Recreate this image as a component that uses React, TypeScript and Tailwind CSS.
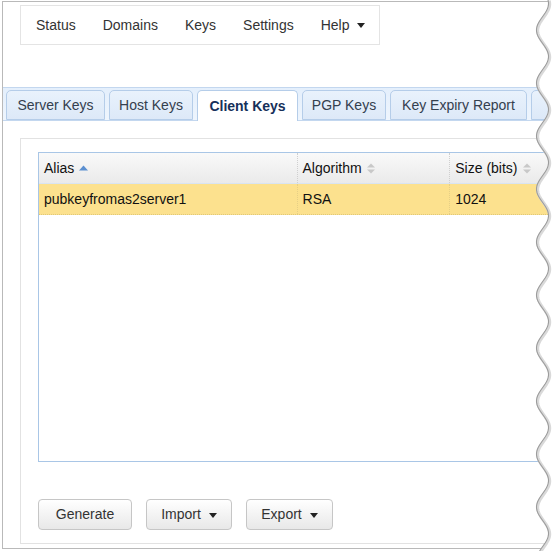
import React from 'react';

const navItems = ['Status', 'Domains', 'Keys', 'Settings'];
const tabs = [
  { label: 'Server Keys', w: 'w-[99px]' },
  { label: 'Host Keys', w: 'w-[84px]' },
  { label: 'Client Keys', w: 'w-[101px]' },
  { label: 'PGP Keys', w: 'w-[84px]' },
  { label: 'Key Expiry Report', w: 'w-[137px]' },
  { label: '', w: 'w-[60px]' },
];

const Caret: React.FC = () => (
  <svg width="8" height="5" viewBox="0 0 8 5" className="ml-[8px] mt-[1px]">
    <path d="M0 0 L8 0 L4 5 Z" fill="#222" />
  </svg>
);

const SortBoth: React.FC = () => (
  <svg width="8" height="11" viewBox="0 0 8 11" className="ml-[5px]">
    <path d="M0 4.5 L4 0.5 L8 4.5 Z" fill="#c8c8c8" />
    <path d="M0 6.5 L4 10.5 L8 6.5 Z" fill="#c8c8c8" />
  </svg>
);

const SortUp: React.FC = () => (
  <svg width="9" height="6" viewBox="0 0 9 6" className="ml-[5px]">
    <path d="M0 5.5 L4.5 0.5 L9 5.5 Z" fill="#5b8fd0" />
  </svg>
);

// torn right edge of the screenshot
const TornEdge: React.FC = () => {
  const h = 551;
  const pts: string[] = [];
  for (let y = 0; y <= h; y += 1) {
    const x = 14.5 - 6 * Math.cos((2 * Math.PI * (y - 30)) / 53);
    pts.push(`${x.toFixed(2)},${y}`);
  }
  const line = 'M' + pts.join(' L');
  return (
    <svg width="24" height={h} viewBox={`0 0 24 ${h}`} className="absolute top-0 left-[528px]">
      <path d={`${line} L24,${h} L24,0 Z`} fill="#ffffff" />
      <path d={line} fill="none" stroke="#d9d9d9" strokeWidth="3" transform="translate(1.2,0.6)" />
      <path d={line} fill="none" stroke="#9c9c9c" strokeWidth="1.1" />
    </svg>
  );
};

const Button: React.FC<{ label: string; caret?: boolean; w: string }> = ({ label, caret, w }) => (
  <button
    className={`${w} h-[31px] flex items-center justify-center rounded-[4px] border border-[#c6c6c6] bg-gradient-to-b from-[#ffffff] to-[#e8e8e8] text-[14px] text-[#333]`}
  >
    {label}
    {caret && <Caret />}
  </button>
);

const App: React.FC = () => {
  return (
    <div
      className="relative w-[552px] h-[551px] overflow-hidden bg-white text-[14px]"
      style={{ fontFamily: '"Liberation Sans", Arial, sans-serif' }}
    >
      <div className="mt-[1px] ml-[2px] w-[600px] h-[548px] border-l border-t border-b border-[#b9b9b9]">
        {/* Top navigation */}
        <div className="ml-[17px] mt-[3px] w-[360px] h-[40px] border border-[#e4e4e4] flex items-center pl-[15px] text-[#333]">
          {navItems.map((n) => (
            <span key={n} className="mr-[27px]">{n}</span>
          ))}
          <span className="flex items-center">
            Help
            <Caret />
          </span>
        </div>

        {/* Tabs */}
        <div className="mt-[42px] h-[34px] border-t border-b border-[#c3d7ef] bg-gradient-to-b from-[#e4effc] to-[#eef5fd] flex items-end pl-[3px] gap-[4px]">
          {tabs.map((t, i) => {
            const active = t.label === 'Client Keys';
            return (
              <div
                key={i}
                className={`${t.w} shrink-0 flex items-center justify-center rounded-t-[5px] border ${
                  active
                    ? 'h-[31px] -mb-[1px] border-b-0 border-[#b5cde9] bg-white font-bold text-[#16305a]'
                    : 'h-[30px] border-[#b5cde9] bg-gradient-to-b from-[#e9f2fc] to-[#dde9f8] text-[#34404e]'
                }`}
              >
                {t.label}
              </div>
            );
          })}
        </div>

        {/* Panel */}
        <div className="ml-[17px] mt-[17px] h-[406px] border border-[#e2e2e2] pt-[13px] pl-[17px]">
          <div className="h-[310px] border border-[#a9c6e6] bg-white">
            <div className="flex h-[31px] bg-gradient-to-b from-[#f9f9f9] to-[#eaeaea] border-b border-[#d9e4f0] text-[#111]">
              <div className="w-[259px] flex items-center pl-[5px] border-r border-dotted border-[#cfcfcf]">
                Alias
                <SortUp />
              </div>
              <div className="w-[153px] flex items-center pl-[5px] border-r border-dotted border-[#cfcfcf]">
                Algorithm
                <SortBoth />
              </div>
              <div className="w-[150px] flex items-center pl-[5px]">
                Size (bits)
                <SortBoth />
              </div>
            </div>
            <div className="flex h-[31px] bg-[#fce18e] border-b border-dotted border-[#e0c878] text-[#111]">
              <div className="w-[259px] flex items-center pl-[5px] border-r border-dotted border-[#e6cf86]">
                pubkeyfromas2server1
              </div>
              <div className="w-[153px] flex items-center pl-[5px] border-r border-dotted border-[#e6cf86]">
                RSA
              </div>
              <div className="w-[150px] flex items-center pl-[5px]">1024</div>
            </div>
          </div>

          <div className="mt-[37px] flex gap-[14px]">
            <Button label="Generate" w="w-[94px]" />
            <Button label="Import" caret w="w-[86px]" />
            <Button label="Export" caret w="w-[87px]" />
          </div>
        </div>
      </div>

      <TornEdge />
    </div>
  );
};

export default App;
